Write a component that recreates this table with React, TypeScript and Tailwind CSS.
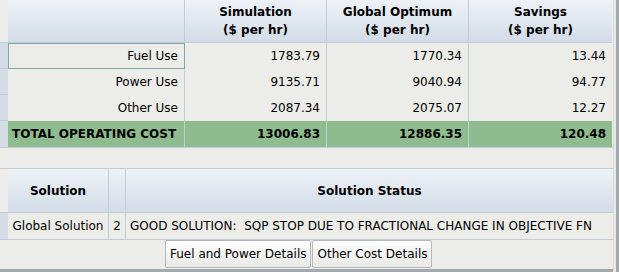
import React from 'react';

const font = { fontFamily: '"DejaVu Sans", Verdana, Tahoma, sans-serif' };

const rows = [
  { label: 'Fuel Use', sim: '1783.79', opt: '1770.34', save: '13.44' },
  { label: 'Power Use', sim: '9135.71', opt: '9040.94', save: '94.77' },
  { label: 'Other Use', sim: '2087.34', opt: '2075.07', save: '12.27' },
];

const head = 'bg-gradient-to-b from-[#eef2f7] to-[#d2dce7] border-[#c3ccd6]';

export default function App() {
  return (
    <div className="w-[619px] h-[272px] bg-[#ececea] text-[12px] text-black flex overflow-hidden" style={font}>
      <div className="flex-1 flex flex-col border-b-[3px] border-[#a4a9ae]">
        {/* cost table */}
        <div className="grid grid-cols-[8px_177px_142px_142px_143px] border-b border-[#c3ccd6] w-[613px]">
          <div className="h-[43px] bg-[#ececea] border-b border-[#c3ccd6]" />
          <div className={`h-[43px] ${head} border-b border-r`} />
          <div className={`h-[43px] ${head} border-b border-r flex flex-col items-center justify-center font-bold leading-[18px]`}>
            <span>Simulation</span><span>($ per hr)</span>
          </div>
          <div className={`h-[43px] ${head} border-b border-r flex flex-col items-center justify-center font-bold leading-[18px]`}>
            <span>Global Optimum</span><span>($ per hr)</span>
          </div>
          <div className={`h-[43px] ${head} border-b flex flex-col items-center justify-center font-bold leading-[18px]`}>
            <span>Savings</span><span>($ per hr)</span>
          </div>
          {rows.map((r, i) => (
            <React.Fragment key={r.label}>
              <div className="h-[26px] bg-[#d4dce6] border-b border-[#c3ccd6]" />
              <div
                className={`h-[26px] bg-[#ecece8] border-r border-[#c3ccd6] flex items-center justify-end pr-[6px] ${
                  i === 0 ? 'outline outline-1 -outline-offset-1 outline-[#7fa9ad]' : ''
                }`}
              >
                {r.label}
              </div>
              <div className="h-[26px] bg-[#ecece8] border-r border-[#c3ccd6] flex items-center justify-end pr-[6px]">{r.sim}</div>
              <div className="h-[26px] bg-[#ecece8] border-r border-[#c3ccd6] flex items-center justify-end pr-[6px]">{r.opt}</div>
              <div className="h-[26px] bg-[#ecece8] flex items-center justify-end pr-[6px]">{r.save}</div>
            </React.Fragment>
          ))}
          <div className="h-[26px] bg-[#d4dce6]" />
          <div className="h-[26px] bg-[#8fbc8f] border-r border-[#c3ccd6] flex items-center pl-[4px] font-bold whitespace-nowrap">
            TOTAL OPERATING COST
          </div>
          <div className="h-[26px] bg-[#8fbc8f] border-r border-[#c3ccd6] flex items-center justify-end pr-[6px] font-bold">13006.83</div>
          <div className="h-[26px] bg-[#8fbc8f] border-r border-[#c3ccd6] flex items-center justify-end pr-[6px] font-bold">12886.35</div>
          <div className="h-[26px] bg-[#8fbc8f] flex items-center justify-end pr-[6px] font-bold">120.48</div>
        </div>

        <div className="h-[20px]" />

        {/* solution table */}
        <div className="grid grid-cols-[8px_101px_17px_487px] border-t border-b border-[#c3ccd6] w-[613px]">
          <div className="h-[44px] bg-[#ececea] border-b border-[#c3ccd6]" />
          <div className={`h-[44px] ${head} border-b border-r flex items-center justify-center font-bold`}>Solution</div>
          <div className={`h-[44px] ${head} border-b border-r`} />
          <div className={`h-[44px] ${head} border-b flex items-center justify-center font-bold`}>Solution Status</div>
          <div className="h-[26px] bg-[#d4dce6]" />
          <div className="h-[26px] bg-[#ecece8] border-r border-[#c3ccd6] flex items-center justify-center whitespace-nowrap">Global Solution</div>
          <div className="h-[26px] bg-[#ecece8] border-r border-[#c3ccd6] flex items-center justify-center">2</div>
          <div className="h-[26px] bg-[#ecece8] flex items-center pl-[4px] whitespace-nowrap overflow-hidden">
            GOOD SOLUTION:&nbsp; SQP STOP DUE TO FRACTIONAL CHANGE IN OBJECTIVE FN
          </div>
        </div>

        {/* detail buttons */}
        <div className="flex-1 flex items-end pl-[165px] pb-[1px]">
          <div className="flex">
            <button className="h-[28px] px-[4px] bg-gradient-to-b from-white to-[#e8e8e6] border border-[#b5b9bd] rounded-[2px] whitespace-nowrap">
              Fuel and Power Details
            </button>
            <button className="h-[28px] px-[4px] ml-[1px] bg-gradient-to-b from-white to-[#e8e8e6] border border-[#b5b9bd] rounded-[2px] whitespace-nowrap">
              Other Cost Details
            </button>
          </div>
        </div>
      </div>
      <div className="w-[6px] flex">
        <div className="w-[1px] bg-[#dcdcdc]" />
        <div className="w-[2px] bg-[#e8e8e8]" />
        <div className="w-[3px] bg-[#a4a9ae]" />
      </div>
    </div>
  );
}
